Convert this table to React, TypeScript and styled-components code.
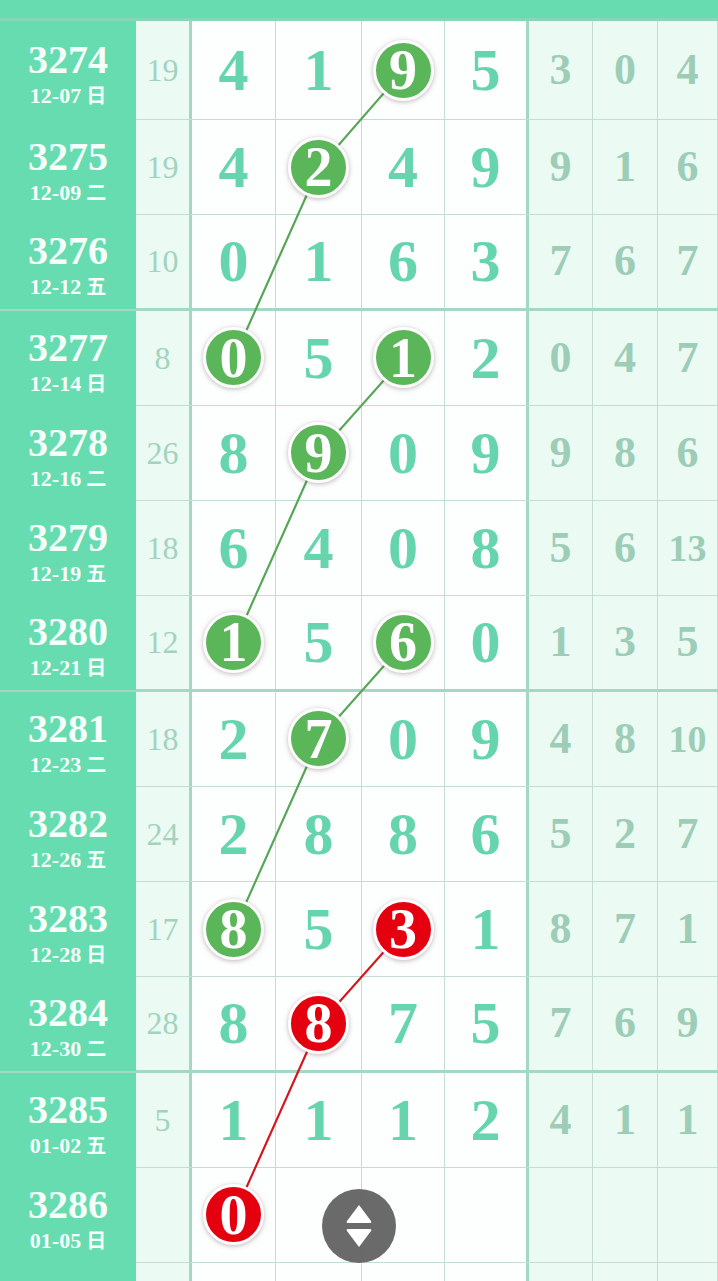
import React from 'react'
import styled, { createGlobalStyle } from 'styled-components'

const GlobalStyle = createGlobalStyle`
  html, body {
    margin: 0;
    padding: 0;
    background: #ffffff;
    overflow: hidden;
  }
  body {
    font-family: 'Liberation Serif', 'Noto Sans CJK SC', serif;
  }
`

// column widths of the trend table
const COLS = '136px 56px 84px 86px 83px 84px 64px 65px 1fr'
const FIRST_ROW = 99
const ROW_H = 95.25
const DIGIT_X = [234, 319, 403.5, 487]

type Hit = { col: number; color: 'green' | 'red' }
type Draw = {
  no: string
  date: string
  day: string
  count: string
  digits: string[]
  stats: string[]
  hits: Hit[]
  groupEnd?: boolean
}

const draws: Draw[] = [
  { no: '3274', date: '12-07', day: '日', count: '19', digits: ['4', '1', '9', '5'], stats: ['3', '0', '4'], hits: [{ col: 2, color: 'green' }] },
  { no: '3275', date: '12-09', day: '二', count: '19', digits: ['4', '2', '4', '9'], stats: ['9', '1', '6'], hits: [{ col: 1, color: 'green' }] },
  { no: '3276', date: '12-12', day: '五', count: '10', digits: ['0', '1', '6', '3'], stats: ['7', '6', '7'], hits: [], groupEnd: true },
  { no: '3277', date: '12-14', day: '日', count: '8', digits: ['0', '5', '1', '2'], stats: ['0', '4', '7'], hits: [{ col: 0, color: 'green' }, { col: 2, color: 'green' }] },
  { no: '3278', date: '12-16', day: '二', count: '26', digits: ['8', '9', '0', '9'], stats: ['9', '8', '6'], hits: [{ col: 1, color: 'green' }] },
  { no: '3279', date: '12-19', day: '五', count: '18', digits: ['6', '4', '0', '8'], stats: ['5', '6', '13'], hits: [] },
  { no: '3280', date: '12-21', day: '日', count: '12', digits: ['1', '5', '6', '0'], stats: ['1', '3', '5'], hits: [{ col: 0, color: 'green' }, { col: 2, color: 'green' }], groupEnd: true },
  { no: '3281', date: '12-23', day: '二', count: '18', digits: ['2', '7', '0', '9'], stats: ['4', '8', '10'], hits: [{ col: 1, color: 'green' }] },
  { no: '3282', date: '12-26', day: '五', count: '24', digits: ['2', '8', '8', '6'], stats: ['5', '2', '7'], hits: [] },
  { no: '3283', date: '12-28', day: '日', count: '17', digits: ['8', '5', '3', '1'], stats: ['8', '7', '1'], hits: [{ col: 0, color: 'green' }, { col: 2, color: 'red' }] },
  { no: '3284', date: '12-30', day: '二', count: '28', digits: ['8', '8', '7', '5'], stats: ['7', '6', '9'], hits: [{ col: 1, color: 'red' }], groupEnd: true },
  { no: '3285', date: '01-02', day: '五', count: '5', digits: ['1', '1', '1', '2'], stats: ['4', '1', '1'], hits: [] },
  { no: '3286', date: '01-05', day: '日', count: '', digits: ['0', '', '', ''], stats: ['', '', ''], hits: [{ col: 0, color: 'red' }] },
]

// trend chains: [row, col] pairs
const chains: { color: string; pts: [number, number][] }[] = [
  { color: '#55a657', pts: [[0, 2], [1, 1], [3, 0]] },
  { color: '#55a657', pts: [[3, 2], [4, 1], [6, 0]] },
  { color: '#55a657', pts: [[6, 2], [7, 1], [9, 0]] },
  { color: '#d7141c', pts: [[9, 2], [10, 1], [12, 0]] },
]

const rowCenter = (i: number) =>
  i === 0 ? FIRST_ROW / 2 : FIRST_ROW + (i - 1) * ROW_H + ROW_H / 2

const Page = styled.div`
  width: 718px;
  height: 1281px;
  overflow: hidden;
  background: #fdfffe;
`

const TopBar = styled.div`
  height: 18px;
  background: #66dcb0;
  border-bottom: 3px solid #88d6b8;
`

const Body = styled.div`
  position: relative;
`

const Row = styled.div<{ $h: number; $thick?: boolean }>`
  display: grid;
  grid-template-columns: ${COLS};
  height: ${(p) => p.$h}px;
  box-sizing: border-box;
  border-bottom: ${(p) => (p.$thick ? '3px solid #a4d8c4' : '1px solid #c4ddd3')};
`

const Label = styled.div`
  background: #66dcb0;
  margin-bottom: -1px;
  display: flex;
  flex-direction: column;
  align-items: center;
  justify-content: center;
  padding-top: 6px;
  color: #f6fffa;
`

const IssueNo = styled.div`
  font-family: 'Liberation Serif', serif;
  font-weight: 700;
  font-size: 40px;
  line-height: 40px;
`

const IssueDate = styled.div`
  font-family: 'Liberation Serif', 'Noto Sans CJK SC', serif;
  font-weight: 700;
  font-size: 22px;
  line-height: 22px;
  margin-top: 4px;
  white-space: nowrap;
  span {
    font-family: 'Noto Sans CJK SC', sans-serif;
    font-size: 20px;
    margin-left: 5px;
  }
`

const Count = styled.div`
  background: #ebfbf4;
  border-right: 3px solid #a4d8c4;
  display: flex;
  align-items: center;
  justify-content: center;
  font-size: 32px;
  line-height: 1;
  color: #a3d3be;
`

const DigitCell = styled.div<{ $last?: boolean }>`
  background: #fdfffe;
  border-right: ${(p) => (p.$last ? '3px solid #a4d8c4' : '1px solid #c4ddd3')};
  display: flex;
  align-items: center;
  justify-content: center;
  font-weight: 700;
  font-size: 60px;
  line-height: 1;
  color: #66d5ad;
`

const Ball = styled.div<{ $red?: boolean }>`
  position: relative;
  z-index: 2;
  width: 55px;
  height: 55px;
  border-radius: 50%;
  border: 3px solid #ffffff;
  background: ${(p) => (p.$red ? '#e5000f' : '#5bb65a')};
  box-shadow: 0 1px 5px rgba(80, 40, 60, 0.35);
  display: flex;
  align-items: center;
  justify-content: center;
  color: #ffffff;
  font-size: 56px;
  line-height: 1;
`

const Stat = styled.div<{ $small?: boolean }>`
  background: #ebfbf4;
  border-right: 1px solid #c4ddd3;
  display: flex;
  align-items: center;
  justify-content: center;
  font-weight: 700;
  font-size: ${(p) => (p.$small ? '38px' : '44px')};
  line-height: 1;
  color: #9dcdb6;
`

const Lines = styled.svg`
  position: absolute;
  left: 0;
  top: 0;
  z-index: 1;
  pointer-events: none;
`

const Scroller = styled.div`
  position: fixed;
  left: 322px;
  top: 1189px;
  width: 74px;
  height: 74px;
  border-radius: 50%;
  background: rgba(98, 98, 98, 0.95);
  display: flex;
  align-items: center;
  justify-content: center;
`

const App = () => {
  const bodyH = FIRST_ROW + (draws.length - 1) * ROW_H + 40

  return (
    <Page>
      <GlobalStyle />
      <TopBar />
      <Body>
        {draws.map((d, i) => (
          <Row key={d.no} $h={i === 0 ? FIRST_ROW : ROW_H} $thick={d.groupEnd}>
            <Label>
              <IssueNo>{d.no}</IssueNo>
              <IssueDate>
                {d.date}
                <span>{d.day}</span>
              </IssueDate>
            </Label>
            <Count>{d.count}</Count>
            {d.digits.map((n, c) => {
              const hit = d.hits.find((h) => h.col === c)
              return (
                <DigitCell key={c} $last={c === 3}>
                  {hit ? <Ball $red={hit.color === 'red'}>{n}</Ball> : n}
                </DigitCell>
              )
            })}
            {d.stats.map((s, c) => (
              <Stat key={c} $small={s.length > 1}>
                {s}
              </Stat>
            ))}
          </Row>
        ))}
        <Row $h={40}>
          <Label />
          <Count />
          <DigitCell />
          <DigitCell />
          <DigitCell />
          <DigitCell $last />
          <Stat />
          <Stat />
          <Stat />
        </Row>
        <Lines width={718} height={bodyH} viewBox={`0 0 718 ${bodyH}`}>
          {chains.map((ch, k) => (
            <polyline
              key={k}
              points={ch.pts.map(([r, c]) => `${DIGIT_X[c]},${rowCenter(r)}`).join(' ')}
              fill="none"
              stroke={ch.color}
              strokeWidth={2.2}
            />
          ))}
        </Lines>
      </Body>
      <Scroller>
        <svg width="30" height="46" viewBox="0 0 30 46">
          <path d="M15 2 L27 18 Q28 20 26 20 L4 20 Q2 20 3 18 Z" fill="#ffffff" />
          <path d="M15 44 L27 28 Q28 26 26 26 L4 26 Q2 26 3 28 Z" fill="#ffffff" />
        </svg>
      </Scroller>
    </Page>
  )
}

export default App
